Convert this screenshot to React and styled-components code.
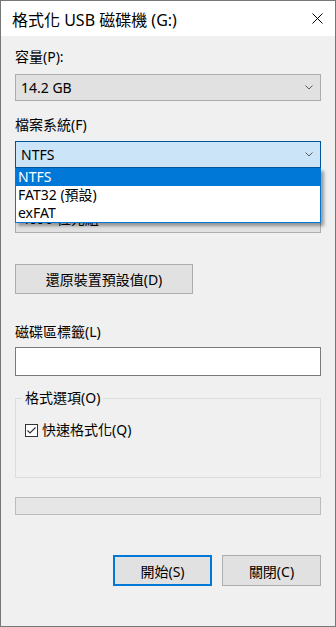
import React from 'react'
import styled, { createGlobalStyle } from 'styled-components'

const Global = createGlobalStyle`
  html, body {
    margin: 0;
    padding: 0;
    background: #f0f0f0;
  }
`

const Chevron = () => (
  <svg width="8" height="5" viewBox="0 0 8 5">
    <polyline points="0.5,0.5 4,4 7.5,0.5" fill="none" stroke="#5a5a5a" strokeWidth="1" />
  </svg>
)

const CloseIcon = () => (
  <svg width="11" height="11" viewBox="0 0 11 11">
    <path d="M0.5 0.5 L10.5 10.5 M10.5 0.5 L0.5 10.5" stroke="#000" strokeWidth="1" />
  </svg>
)

const CheckIcon = () => (
  <svg width="13" height="13" viewBox="0 0 13 13">
    <rect x="0.5" y="0.5" width="12" height="12" fill="#fff" stroke="#333" />
    <polyline points="2.5,6.5 5,9 10.5,3.5" fill="none" stroke="#333" strokeWidth="1.2" />
  </svg>
)

const fileSystems = ['NTFS', 'FAT32 (預設)', 'exFAT']

export default function App() {
  return (
    <>
      <Global />
      <Window>
        <TitleBar>
          <span>格式化 USB 磁碟機 (G:)</span>
          <CloseIcon />
        </TitleBar>
        <Body>
          <Label $mt={12}>容量(P):</Label>
          <Combo $mt={8}>
            <span>14.2 GB</span>
            <Chevron />
          </Combo>

          <Label $mt={15}>檔案系統(F)</Label>
          <ComboWrap $mt={7}>
            <Combo $focused>
              <span>NTFS</span>
              <Chevron />
            </Combo>
            <DropList>
              {fileSystems.map((fs, i) => (
                <DropItem key={fs} $selected={i === 0}>{fs}</DropItem>
              ))}
            </DropList>
          </ComboWrap>

          {/* allocation size field, mostly hidden under the open list */}
          <Label $mt={14}>配置單位大小(A)</Label>
          <Combo $mt={6} $raise={4}>
            <span>4096 位元組</span>
            <Chevron />
          </Combo>

          <Button $mt={31} $width={178}>還原裝置預設值(D)</Button>

          <Label $mt={29}>磁碟區標籤(L)</Label>
          <TextBox />

          <Group>
            <Legend>格式選項(O)</Legend>
            <CheckRow>
              <CheckIcon />
              <span>快速格式化(Q)</span>
            </CheckRow>
          </Group>

          <Progress />

          <Actions>
            <Button $width={99} $height={31} $primary>開始(S)</Button>
            <Button $width={99} $height={31}>關閉(C)</Button>
          </Actions>
        </Body>
      </Window>
    </>
  )
}

const Window = styled.div`
  width: 336px;
  height: 627px;
  box-sizing: border-box;
  border: 1px solid #777;
  background: #f0f0f0;
  display: flex;
  flex-direction: column;
  font-family: "Noto Sans", "Noto Sans CJK TC", sans-serif;
  font-size: 14px;
  color: #000;
`

const TitleBar = styled.div`
  height: 35px;
  flex: none;
  background: #fff;
  display: flex;
  align-items: center;
  justify-content: space-between;
  padding: 0 12px 0 11px;
  font-size: 16px;
`

const Body = styled.div`
  display: flex;
  flex-direction: column;
  padding: 0 14px;
`

const Label = styled.div`
  margin-top: ${p => p.$mt || 0}px;
  line-height: 18px;
  height: 18px;
`

const ComboWrap = styled.div`
  position: relative;
  margin-top: ${p => p.$mt || 0}px;
`

const Combo = styled.div`
  margin-top: ${p => p.$mt || 0}px;
  height: 27px;
  box-sizing: border-box;
  border: 1px solid ${p => (p.$focused ? '#005499' : '#adadad')};
  background: ${p => (p.$focused ? '#cce4f7' : '#e1e1e1')};
  display: flex;
  align-items: center;
  justify-content: space-between;
  padding: 0 7px ${p => p.$raise || 0}px 5px;
`

const DropList = styled.div`
  position: absolute;
  top: 100%;
  left: 0;
  width: 306px;
  box-sizing: border-box;
  border: 1px solid #0078d7;
  border-top: none;
  background: #fff;
  box-shadow: 3px 3px 3px rgba(0, 0, 0, 0.35);
  z-index: 2;
`

const DropItem = styled.div`
  height: 18px;
  line-height: 18px;
  padding-left: 2px;
  background: ${p => (p.$selected ? '#0078d7' : 'transparent')};
  color: ${p => (p.$selected ? '#fff' : '#000')};
`

const Button = styled.div`
  margin-top: ${p => p.$mt || 0}px;
  width: ${p => p.$width}px;
  height: ${p => p.$height || 30}px;
  box-sizing: border-box;
  border: ${p => (p.$primary ? '2px solid #0078d7' : '1px solid #adadad')};
  background: #e1e1e1;
  display: flex;
  align-items: center;
  justify-content: center;
`

const TextBox = styled.div`
  margin-top: 6px;
  height: 29px;
  box-sizing: border-box;
  border: 1px solid #7a7a7a;
  background: #fff;
`

const Group = styled.fieldset`
  margin: 13px 0 0;
  padding: 0 6px;
  min-width: 0;
  height: 89px;
  box-sizing: border-box;
  border: 1px solid #dcdcdc;
`

const Legend = styled.legend`
  padding: 0 3px;
  line-height: 18px;
`

const CheckRow = styled.div`
  margin: 14px 0 0 3px;
  display: flex;
  align-items: center;
  gap: 4px;
  line-height: 18px;

  svg {
    flex: none;
  }
`

const Progress = styled.div`
  margin-top: 19px;
  height: 18px;
  box-sizing: border-box;
  border: 1px solid #bcbcbc;
  background: #e6e6e6;
`

const Actions = styled.div`
  margin-top: 40px;
  display: flex;
  justify-content: flex-end;
  gap: 10px;
`
